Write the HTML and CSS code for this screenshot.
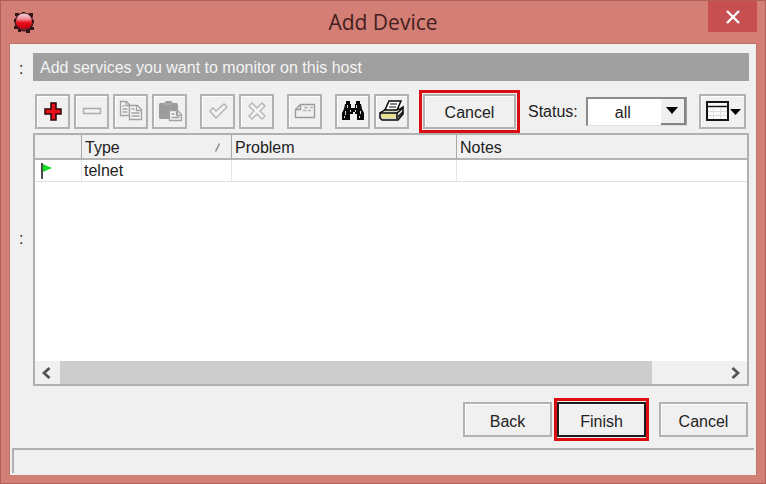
FILE: index.html
```html
<!DOCTYPE html>
<html lang="en">
<head>
<meta charset="utf-8">
<title>Add Device</title>
<link rel="stylesheet" href="styles.css">
</head>
<body>
<div class="window">
  <header class="titlebar">
    <svg class="app-icon" width="22" height="22" viewBox="0 0 22 22" aria-hidden="true">
      <defs><linearGradient id="orb" x1="0" y1="0" x2="0" y2="1"><stop offset="0" stop-color="#f6d4d6"/><stop offset=".35" stop-color="#f08890"/><stop offset=".55" stop-color="#ec1420"/><stop offset=".8" stop-color="#d80010"/><stop offset="1" stop-color="#8a1018"/></linearGradient></defs>
      <circle cx="11" cy="11" r="8.600" fill="none" stroke="#4a1c20" stroke-width="2"/>
      <path d="M2 2h4v3H2zM9 1h3v2H9zM16 2h4v4h-4zM18 9h3v3h-3zM17 16h4v3h-4zM13 18h4v4h-4zM5 18h3v3H5zM1 15h4v3H1zM1 8h3v3H1z" fill="#35151a"/>
      <circle cx="11" cy="10.500" r="8" fill="url(#orb)"/>
    </svg>
    <h1 class="title">Add Device</h1>
    <button class="close" type="button" aria-label="Close">
      <svg width="16" height="14" viewBox="0 0 16 14"><path d="M2 1l12 12M14 1L2 13" stroke="#fff" stroke-width="2.400"/></svg>
    </button>
  </header>
  <main class="client">
    <div class="form">
      <span class="colon">:</span>
      <h2 class="banner">Add services you want to monitor on this host</h2>
      <span class="colon">:</span>
      <section class="services">
        <div class="toolbar">
          <div class="group">
            <button class="tool" type="button" aria-label="Add"><svg width="20" height="20" viewBox="0 0 20 20"><path d="M8 2h5v6h5v5h-5v6H8v-6H2V8h6z" fill="#e8101c" stroke="#2c0505" stroke-width="1.500"/></svg></button>
            <button class="tool" type="button" disabled aria-label="Remove"><svg width="20" height="20" viewBox="0 0 20 20"><path d="M1.500 7.500h17v5h-17z" fill="#f2f2f2" stroke="#ababab" stroke-width="1.500"/></svg></button>
            <button class="tool" type="button" disabled aria-label="Copy"><svg width="24" height="22" viewBox="0 0 24 22" fill="#f4f4f4" stroke="#a2a2a2" stroke-width="1.300"><path d="M1.500 1.500h6l3 3v11h-9zM7 1.500v4h4M3.500 6h2M3.500 9h5M3.500 12h5"/><path d="M10.500 5.500h8l4 4v10h-12zM17.500 5.500v5h5M12.500 9h3M12.500 13h8M12.500 16h8"/></svg></button>
            <button class="tool" type="button" disabled aria-label="Paste"><svg width="26" height="22" viewBox="0 0 26 22"><path d="M3 3h4l2-2h5l2 2h4l1 2v14H3l-1-1V4z" fill="#9c9c9c"/><path d="M7 4h8" stroke="#b8b8b8"/><path d="M12.500 10.500h8l4 4v6h-12zM19.500 10.500v5h5M14.500 14h3M14.500 17.500h8" fill="#f4f4f4" stroke="#a2a2a2" stroke-width="1.300"/></svg></button>
          </div>
          <div class="group">
            <button class="tool" type="button" disabled aria-label="Apply"><svg width="20" height="20" viewBox="0 0 20 20"><path d="M2 10l3-3 3 3 8-7 3 3L8 17z" fill="#f4f4f4" stroke="#b4b4b4" stroke-width="1.400"/></svg></button>
            <button class="tool" type="button" disabled aria-label="Discard"><svg width="20" height="20" viewBox="0 0 20 20"><path d="M2 5l3-3 5 5 5-5 3 3-5 5 5 5-3 3-5-5-5 5-3-3 5-5z" fill="#f4f4f4" stroke="#b4b4b4" stroke-width="1.400"/></svg></button>
          </div>
          <div class="group">
            <button class="tool" type="button" disabled aria-label="Properties"><svg width="22" height="20" viewBox="0 0 22 20" fill="none" stroke="#9c9c9c" stroke-width="1.400"><path d="M6.500 3.500h14v13h-19v-8zM6.500 3.500v5h-5"/><path d="M10 6.500h4M16 6.500h3M9 9.500h4M14 9.500h3" stroke="#b8b8b8"/></svg></button>
          </div>
          <div class="group">
            <button class="tool" type="button" aria-label="Find"><svg width="24" height="22" viewBox="0 0 24 22"><path d="M5 1h4v3h1v4h4V4h1V1h4v3h1l1 5 2 4v7h-7v-6h-2v-2h-2v2H9v6H1v-7l2-4 1-5h1z" fill="#080808"/><path d="M6.500 5v3M4.500 11v4M3.500 16v2M9.500 10v2M15.500 5v3M14.500 10v2M19.500 11v3M18.500 16v2" stroke="#d8d8d8"/></svg></button>
            <button class="tool" type="button" aria-label="Print"><svg width="26" height="22" viewBox="0 0 26 22" stroke="#080808" stroke-width="1.500"><path d="M4 11l3-2h14l3-2v7l-5 6H3l-2-2v-5z" fill="#d8d8c8"/><path d="M10 1h12l-4 9H6z" fill="#fff"/><path d="M11 4h7M10 7h7" stroke-width="1.200"/><path d="M1 13h17v6" fill="none"/><path d="M3 16h13" stroke="#e9e480" stroke-width="3"/><path d="M18 13l6-5M19 17l5-5" fill="none"/></svg></button>
          </div>
          <span class="marked"><button class="push" type="button">Cancel</button></span>
          <label class="status-label" for="status">Status:</label>
          <span class="combo">
            <select id="status"><option>all</option></select>
            <span class="combo-arrow"><svg width="12" height="7" viewBox="0 0 12 7"><path d="M0 0h12L6 7z" fill="#000"/></svg></span>
          </span>
          <button class="tool view" type="button" aria-label="Columns"><svg width="36" height="22" viewBox="0 0 36 22"><path d="M2 2h21v18H2z" fill="#fafafa" stroke="#141414" stroke-width="2"/><path d="M2 6.500h21" stroke="#141414" stroke-width="1.500"/><path d="M8.500 8v11M15.500 8v11M3 11.500h19M3 15.500h19" stroke="#dedede"/><path d="M25 9h11l-5.500 6z" fill="#000"/></svg></button>
        </div>
        <div class="list">
          <table>
            <colgroup><col class="c-flag"><col class="c-type"><col class="c-problem"><col></colgroup>
            <thead><tr><th aria-label="State"></th><th><span class="sorted">Type<svg width="8" height="9" viewBox="0 0 8 9" aria-hidden="true"><path d="M1.500 8.500L5.500 .5" stroke="#8c8c8c" stroke-width="1.500"/></svg></span></th><th>Problem</th><th>Notes</th></tr></thead>
            <tbody><tr><td class="flag"><svg width="12" height="16" viewBox="0 0 12 16" aria-hidden="true"><path d="M1 0v16" stroke="#222" stroke-width="1.600"/><path d="M2 1l9 4-9 4z" fill="#18dc28"/></svg></td><td>telnet</td><td></td><td></td></tr></tbody>
          </table>
          <div class="scrollbar">
            <button type="button" aria-label="Scroll left"><svg width="10" height="12" viewBox="0 0 10 12"><path d="M8.500 1L3 6l5.500 5" fill="none" stroke="#555" stroke-width="2.800"/></svg></button>
            <div class="track"><div class="thumb"></div></div>
            <button type="button" aria-label="Scroll right"><svg width="10" height="12" viewBox="0 0 10 12"><path d="M1.500 1L7 6l-5.500 5" fill="none" stroke="#555" stroke-width="2.800"/></svg></button>
          </div>
        </div>
      </section>
    </div>
    <div class="actions">
      <button class="push" type="button">Back</button>
      <span class="marked"><button class="push default" type="button">Finish</button></span>
      <button class="push last" type="button">Cancel</button>
    </div>
    <footer class="statusbar"></footer>
  </main>
</div>
</body>
</html>
```

FILE: styles.css
```css
* { box-sizing: border-box; }
body {
  margin: 0;
  color: #222;
  font: 16px/20px "Liberation Sans", Arial, sans-serif;
}
button, select { font: inherit; color: inherit; }
button { padding: 0; }
svg { display: block; flex: none; }

.window {
  display: flex;
  flex-direction: column;
  min-height: 100vh;
  padding: 0 8px 8px;
  background: #d47f76;
  border: 1px solid #b25f58;
}
.titlebar {
  display: grid;
  grid-template-columns: 60px 1fr 60px;
  align-items: center;
  height: 42px;
}
.app-icon { margin-left: 4px; }
.title {
  margin: 0;
  color: #43201d;
  text-align: center;
  font: 400 22px/30px "Open Sans", "Noto Sans", sans-serif;
  font-size: 21px;
}
.close {
  display: grid;
  place-items: center;
  align-self: start;
  justify-self: end;
  width: 49px;
  height: 31px;
  border: 0;
  background: #c74f50;
}

.client {
  flex: 1;
  display: flex;
  flex-direction: column;
  padding: 9px 2px 2px;
  background: #f0f0f0;
  border: 1px solid #b9746d;
  border-bottom: 0;
}
.form {
  flex: 1;
  display: grid;
  grid-template-columns: 21px 1fr;
  grid-template-rows: 28px 1fr;
  row-gap: 8px;
  padding-right: 5px;
}
.colon { align-self: center; padding: 3px 0 0 7px; }
.banner {
  margin: 0;
  padding: 0 7px;
  background: #a0a0a0;
  color: #f4f4f4;
  font-size: 16px;
  font-weight: 400;
  line-height: 30px;
}
.services { display: flex; flex-direction: column; }

.toolbar {
  display: flex;
  align-items: center;
  height: 44px;
  padding: 0 3px 0 2px;
}
.group { display: flex; gap: 4px; margin-right: 13px; }
.group:nth-child(4) { margin-right: 10px; }
.tool, .push {
  height: 35px;
  background: #f0f0f0;
  border: 2px solid #b2b2b2;
  box-shadow: inset 1px 1px #fff;
}
.tool { display: grid; place-items: center; width: 35px; }
.view { width: 47px; margin-left: auto; }
.push { width: 89px; padding-top: 4px; }
.marked { display: flex; padding: 1px; border: 3px solid #dc0d12; }
.toolbar .push { width: 93px; }
.status-label { margin-left: 8px; padding-top: 2px; }
.combo {
  position: relative;
  width: 101px;
  height: 29px;
  margin-left: 8px;
  border: 2px solid #8c8c8c;
  border-right: 1px solid #a0a0a0;
  border-bottom: 1px solid #e0e0e0;
  background: #fff;
}
.combo select {
  width: 100%;
  height: 100%;
  padding: 2px 0 0 27px;
  border: 0;
  appearance: none;
  background: none;
}
.combo-arrow {
  position: absolute;
  top: 0;
  right: 0;
  bottom: 0;
  display: grid;
  place-items: center;
  width: 25px;
  background: #f0f0f0;
  border-right: 2px solid #858585;
  border-bottom: 2px solid #858585;
  pointer-events: none;
}

.list {
  flex: 1;
  display: flex;
  flex-direction: column;
  background: #fff;
  border: 2px solid #b0b0b0;
}
table { width: 100%; table-layout: fixed; border-collapse: separate; border-spacing: 0; }
.c-flag { width: 47px; }
.c-type { width: 150px; }
.c-problem { width: 225px; }
th {
  height: 25px;
  padding: 2px 3px 0;
  background: #f0f0f0;
  border-right: 1px solid #a8a8a8;
  border-bottom: 2px solid #b4b4b4;
  text-align: left;
  font-weight: 400;
}
td {
  height: 22px;
  padding: 0 2px;
  border-right: 1px solid #e4e4e4;
  border-bottom: 1px solid #e0e0e0;
}
.flag { padding-left: 6px; }
th:last-child, td:last-child { border-right: 0; }
.sorted { display: flex; align-items: center; justify-content: space-between; padding-right: 6px; }

.scrollbar { display: flex; height: 23px; margin-top: auto; background: #f0f0f0; }
.scrollbar button {
  display: grid;
  place-items: center;
  width: 25px;
  border: 0;
  background: none;
}
.scrollbar button:first-child { padding-right: 4px; }
.scrollbar button:last-child { padding-left: 2px; }
.track { flex: 1; }
.thumb { width: 89.4%; height: 100%; background: #cdcdcd; }

.actions {
  display: flex;
  align-items: center;
  justify-content: flex-end;
  gap: 2px;
  height: 43px;
  margin-top: 12px;
  padding-right: 6px;
}
.actions .marked { padding: 1px 0; }
.push.default { border-color: #1c1c1c; }
.push.last { margin-left: 8px; }
.statusbar {
  height: 25px;
  margin-top: 7px;
  border-top: 2px solid #b0b0b0;
  border-left: 2px solid #b0b0b0;
}
```
